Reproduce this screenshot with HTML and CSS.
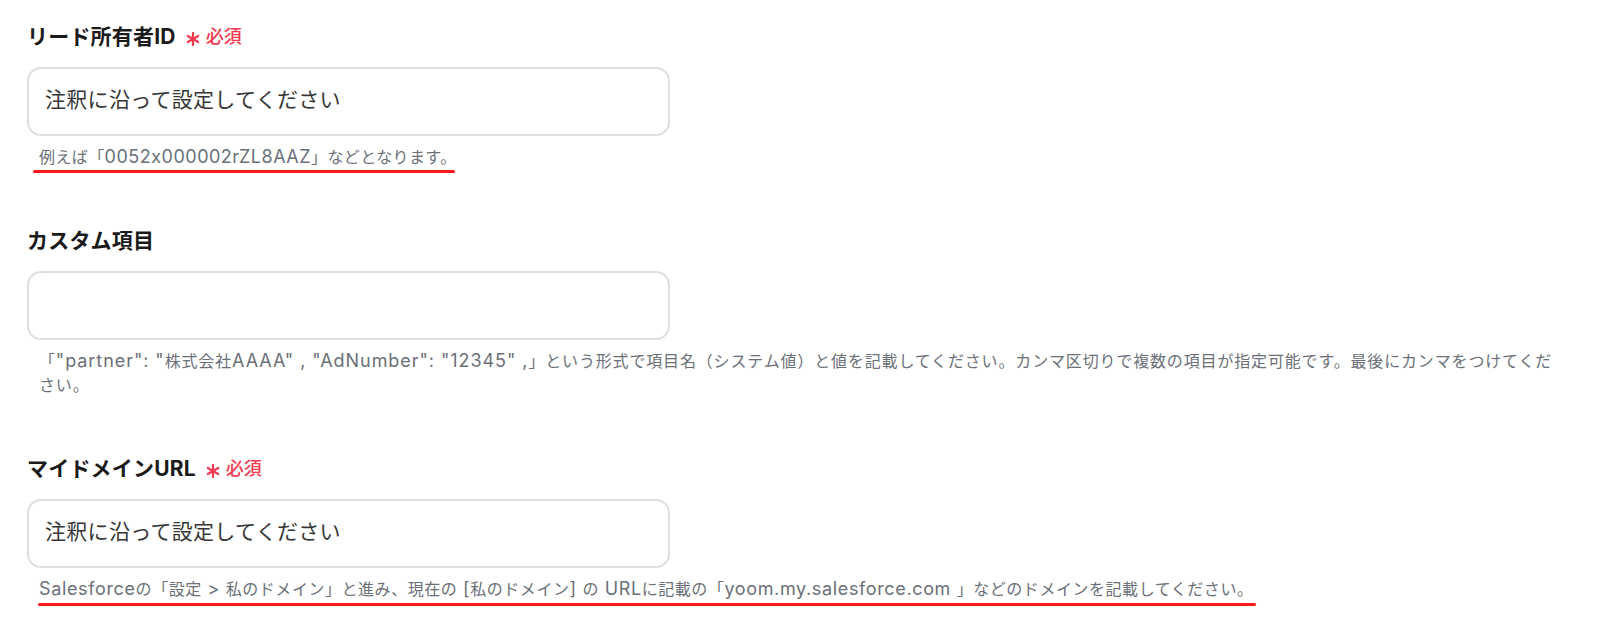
FILE: index.html
```html
<!DOCTYPE html>
<html lang="ja">
<head>
<meta charset="utf-8">
<title>フォーム</title>
<link rel="stylesheet" href="styles.css">
</head>
<body>
<div class="form">
  <div class="field">
    <div class="label">
      <span class="label-text">リード所有者ID</span>
      <svg class="req-mark" viewBox="0 0 14 14" width="14" height="14" aria-hidden="true">
        <g stroke="currentColor" stroke-width="2.2" stroke-linecap="round">
          <line x1="7" y1="1" x2="7" y2="13"/>
          <line x1="1.8" y1="4" x2="12.2" y2="10"/>
          <line x1="1.8" y1="10" x2="12.2" y2="4"/>
        </g>
      </svg>
      <span class="req-text">必須</span>
    </div>
    <div class="input"><span class="placeholder">注釈に沿って設定してください</span></div>
    <p class="help"><span class="mark mark-1">例えば「<span class="lat">0052x000002rZL8AAZ</span>」などとなります。</span></p>
  </div>

  <div class="field">
    <div class="label">
      <span class="label-text">カスタム項目</span>
    </div>
    <div class="input"></div>
    <p class="help help-2">「<span class="lat">"partner": "</span>株式会社<span class="lat">AAAA" , "AdNumber": "12345" ,</span>」という形式で項目名（システム値）と値を記載してください。カンマ区切りで複数の項目が指定可能です。最後にカンマをつけてください。</p>
  </div>

  <div class="field">
    <div class="label">
      <span class="label-text">マイドメインURL</span>
      <svg class="req-mark" viewBox="0 0 14 14" width="14" height="14" aria-hidden="true">
        <g stroke="currentColor" stroke-width="2.2" stroke-linecap="round">
          <line x1="7" y1="1" x2="7" y2="13"/>
          <line x1="1.8" y1="4" x2="12.2" y2="10"/>
          <line x1="1.8" y1="10" x2="12.2" y2="4"/>
        </g>
      </svg>
      <span class="req-text">必須</span>
    </div>
    <div class="input"><span class="placeholder">注釈に沿って設定してください</span></div>
    <p class="help help-3"><span class="mark mark-3"><span class="lat">Salesforce</span>の「設定<span class="lat"> &gt; </span>私のドメイン」と進み、現在の<span class="lat"> [</span>私のドメイン<span class="lat">] </span>の<span class="lat"> URL</span>に記載の「<span class="lat">yoom.my.salesforce.com </span>」などのドメインを記載してください。</span></p>
  </div>
</div>
</body>
</html>
```

FILE: styles.css
```css
* { box-sizing: border-box; }

html, body {
  margin: 0;
  background: #ffffff;
}

body {
  font-family: Inter, "Noto Sans CJK JP", sans-serif;
  color: #1c1c1c;
}

.form {
  width: 1558px;
  padding: 23px 0 40px 27px;
  display: flex;
  flex-direction: column;
  gap: 58px;
}

.field {
  display: flex;
  flex-direction: column;
}

.label {
  height: 28px;
  display: flex;
  align-items: center;
}

.label-text {
  font-size: 21px;
  font-weight: 700;
  line-height: 28px;
  color: #1a1a1a;
  letter-spacing: 0.2px;
}

.req-mark {
  color: #f23a50;
  margin-left: 10px;
  margin-top: 4px;
  width: 14px;
  height: 14px;
}

.req-text {
  color: #f23a50;
  font-size: 18px;
  font-weight: 500;
  line-height: 28px;
  margin-left: 6px;
}

.input {
  margin-top: 16px;
  width: 643px;
  height: 69px;
  border: 2px solid #dcdfe4;
  border-radius: 14px;
  display: flex;
  align-items: center;
  padding-left: 16px;
}

.placeholder {
  font-size: 21px;
  color: #363636;
  line-height: 28px;
  letter-spacing: 0.3px;
  margin-top: -3px;
}

.help {
  margin: 9px 0 0 0;
  padding-left: 12px;
  font-size: 16px;
  line-height: 24px;
  color: #6b7078;
  letter-spacing: 0.4px;
}

.lat {
  font-size: 18px;
  letter-spacing: 0.5px;
}

.help-2 {
  letter-spacing: 0.84px;
}

.help-2 .lat {
  letter-spacing: 0.94px;
}

.help-3 {
  letter-spacing: 0.54px;
}

.help-3 .lat {
  letter-spacing: 0.64px;
}

.mark {
  position: relative;
  display: inline-block;
}

.mark::after {
  content: "";
  position: absolute;
  height: 3px;
  background: #ff1a1a;
  border-radius: 2px;
}

.mark-1::after {
  left: -6px;
  width: 422px;
  bottom: -4px;
}

.mark-3::after {
  left: -1px;
  width: 1218px;
  bottom: -5px;
}
```
